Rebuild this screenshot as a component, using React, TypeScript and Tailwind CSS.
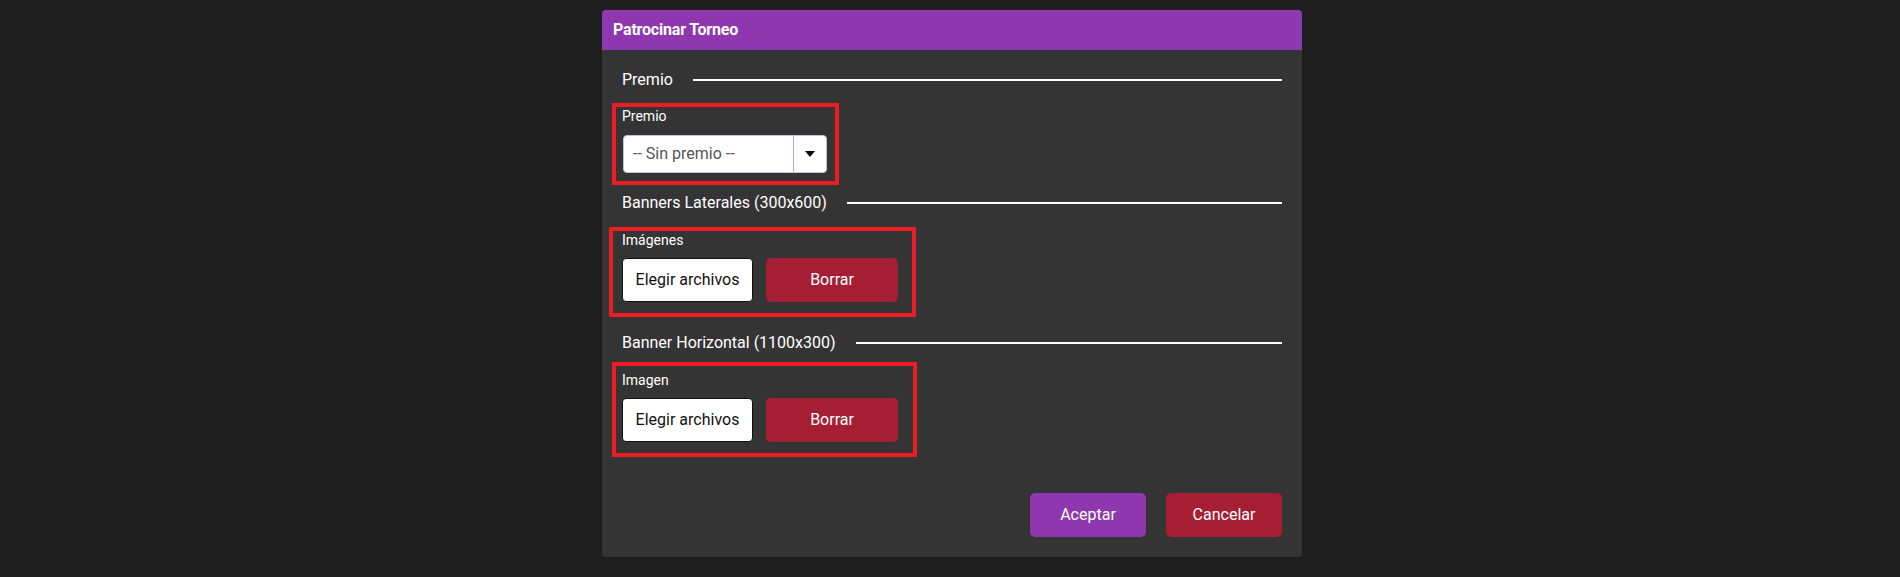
const font = { fontFamily: 'Roboto, "Liberation Sans", sans-serif' };

const SectionTitle: React.FC<{ title: string; className?: string }> = ({ title, className }) => (
  <div className={`flex items-center gap-5 h-6 ${className ?? ''}`}>
    <span className="text-[16px] leading-6 text-white whitespace-nowrap">{title}</span>
    <div className="flex-1 h-[2px] bg-white" />
  </div>
);

const FileButtons: React.FC = () => (
  <div className="flex gap-[13px]">
    <button className="w-[131px] h-[44px] bg-white border border-[#111] rounded-[4px] text-[16px] text-[#111]">
      Elegir archivos
    </button>
    <button className="w-[132px] h-[44px] bg-[#a61e34] rounded-[5px] text-[16px] text-white">
      Borrar
    </button>
  </div>
);

const App: React.FC = () => {
  return (
    <div className="w-full h-[577px] bg-[#1e1e1e] pt-[10px]" style={font}>
      <div className="ml-[602px] w-[700px] h-[547px] bg-[#343434] rounded-[4px] overflow-hidden flex flex-col">
        <div className="h-10 bg-[#8e37ae] flex items-center pl-[11px]">
          <span className="text-[16px] font-bold text-white tracking-[-0.2px]">Patrocinar Torneo</span>
        </div>
        <div className="px-5 pt-[18px] pb-5 flex flex-col">
          <SectionTitle title="Premio" />
          <div className="mt-[11px] ml-[-10px] w-[227px] border-4 border-[#ec1c24] pl-[6px] pt-[1px] pb-[8px]">
            <div className="text-[14px] leading-4 text-white">Premio</div>
            <div className="mt-[11px] ml-[1px] w-[204px] h-[38px] bg-white rounded-[4px] border border-[#c9bfe0] flex">
              <div className="flex-1 flex items-center pl-[9px] text-[16px] text-[#555]">-- Sin premio --</div>
              <div className="w-[33px] border-l border-[#b9abd9] flex items-center justify-center">
                <svg width="10" height="6" viewBox="0 0 10 6">
                  <path d="M0 0 L10 0 L5 6 Z" fill="#000" />
                </svg>
              </div>
            </div>
          </div>
          <SectionTitle title="Banners Laterales (300x600)" className="mt-[6px]" />
          <div className="mt-[12px] ml-[-13px] w-[307px] border-4 border-[#ec1c24] pl-[9px] pt-[1px] pb-[11px]">
            <div className="text-[14px] leading-4 text-white">Imágenes</div>
            <div className="mt-[10px]">
              <FileButtons />
            </div>
          </div>
          <SectionTitle title="Banner Horizontal (1100x300)" className="mt-[14px]" />
          <div className="mt-[7px] ml-[-10px] w-[305px] border-4 border-[#ec1c24] pl-[6px] pt-[6px] pb-[11px]">
            <div className="text-[14px] leading-4 text-white">Imagen</div>
            <div className="mt-[10px]">
              <FileButtons />
            </div>
          </div>
          <div className="mt-[36px] flex justify-end gap-5">
            <button className="w-[116px] h-[44px] bg-[#8e37ae] rounded-[5px] text-[16px] text-white">
              Aceptar
            </button>
            <button className="w-[116px] h-[44px] bg-[#a61e34] rounded-[5px] text-[16px] text-white">
              Cancelar
            </button>
          </div>
        </div>
      </div>
    </div>
  );
};

export default App;
